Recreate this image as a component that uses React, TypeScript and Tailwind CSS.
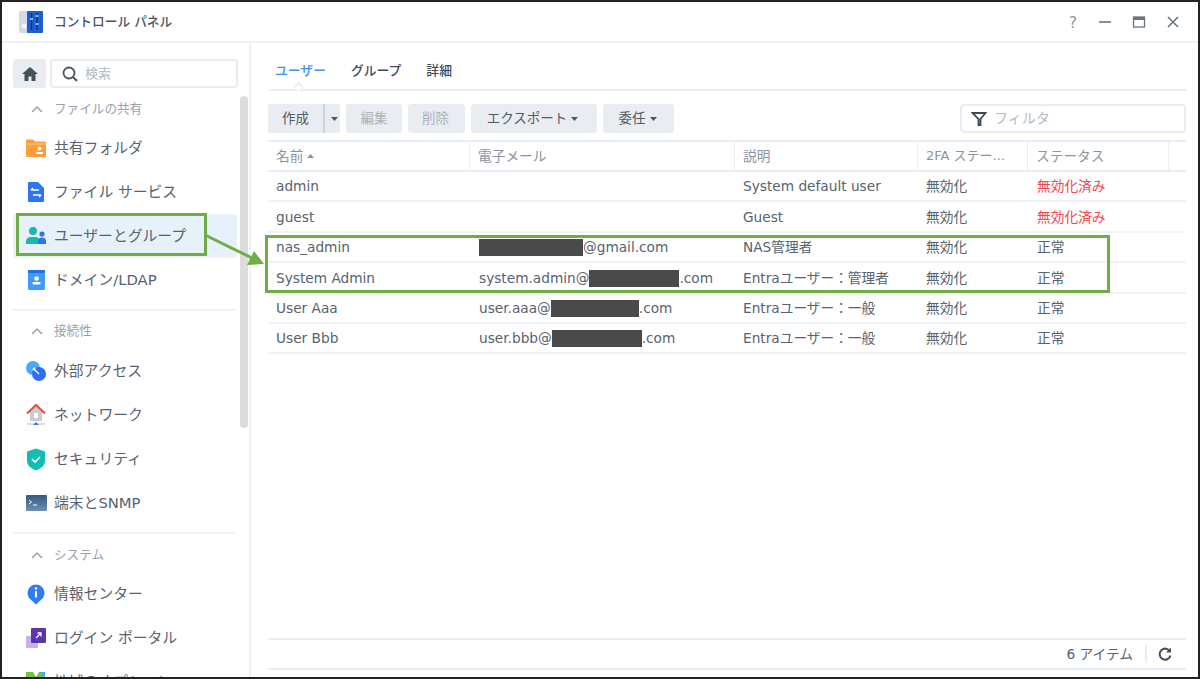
import React from "react";

const JP = "font-['DejaVu_Sans','Noto_Sans_CJK_JP',sans-serif]";

const Folder = () => (
  <svg width="22" height="20" viewBox="0 0 22 20">
    <path d="M1 2.500a1 1 0 0 1 1-1h6l2 2h10a1 1 0 0 1 1 1V18a1 1 0 0 1-1 1H2a1 1 0 0 1-1-1z" fill="#ff9d3b" />
    <path d="M1 5h20v2H1z" fill="#ffb45e" />
    <circle cx="14.500" cy="10.500" r="2" fill="#fff" />
    <rect x="11" y="14" width="7" height="2" rx="0.600" fill="#fff" />
  </svg>
);
const FileSvc = () => (
  <svg width="20" height="22" viewBox="0 0 20 22">
    <path d="M2 2a1 1 0 0 1 1-1h9l6 6v13a1 1 0 0 1-1 1H3a1 1 0 0 1-1-1z" fill="#2f74f0" />
    <path d="M5 9h8M5 9l2-2M15 14H7M15 14l-2 2" stroke="#fff" strokeWidth="1.500" fill="none" />
  </svg>
);
const Users = () => (
  <svg width="22" height="20" viewBox="0 0 22 20">
    <circle cx="8" cy="5" r="4" fill="#19b8b4" />
    <path d="M1 18v-3a5 5 0 0 1 5-4h4a5 5 0 0 1 5 4v3z" fill="#19b8b4" />
    <circle cx="17" cy="8" r="2.600" fill="#2f74f0" />
    <path d="M13 18v-3c0-2 1.500-3.500 4-3.500s4 1.500 4 3.500v3z" fill="#2f74f0" />
  </svg>
);
const Domain = () => (
  <svg width="20" height="22" viewBox="0 0 20 22">
    <rect x="2" y="1" width="17" height="20" rx="1.500" fill="#3f9bfa" />
    <rect x="2" y="1" width="17" height="3" rx="1" fill="#2271e8" />
    <circle cx="10.500" cy="9.500" r="2.300" fill="#fff" />
    <rect x="6.500" y="13" width="8" height="2.500" rx="0.800" fill="#fff" />
  </svg>
);
const External = () => (
  <svg width="22" height="22" viewBox="0 0 22 22">
    <circle cx="8" cy="8" r="7" fill="#4aa8f8" />
    <circle cx="14" cy="14" r="7" fill="#2f6ff0" />
    <path d="M9 9l5 5" stroke="#fff" strokeWidth="1.200" />
    <circle cx="9" cy="9" r="1.500" fill="#fff" />
  </svg>
);
const Network = () => (
  <svg width="20" height="24" viewBox="0 0 20 24">
    <path d="M10 2L2 10h2v8h12v-8h2z" fill="#c8ccd0" />
    <path d="M1 10.500L10 2l9 8.500" fill="none" stroke="#e5503e" strokeWidth="2" />
    <rect x="8" y="10" width="4" height="5" fill="#fff" />
    <path d="M1 21h18" stroke="#c4c8cc" strokeWidth="1.200" />
    <path d="M7 22l3-3 3 3z" fill="#2f7cf6" />
  </svg>
);
const Shield = () => (
  <svg width="20" height="23" viewBox="0 0 20 23">
    <path d="M10 0.500L19 3.500V13c0 4.500-4 7.500-9 9.500C5 20.500 1 17.500 1 13V3.500z" fill="#12bdb4" />
    <path d="M6 11l3 3 5-5" fill="none" stroke="#fff" strokeWidth="1.600" />
  </svg>
);
const Terminal = () => (
  <svg width="22" height="18" viewBox="0 0 22 18">
    <defs>
      <linearGradient id="term" x1="0" y1="0" x2="0" y2="1">
        <stop offset="0" stopColor="#35587f" />
        <stop offset="1" stopColor="#6f8fb0" />
      </linearGradient>
    </defs>
    <rect x="1" y="1" width="21" height="16" rx="1" fill="url(#term)" />
    <path d="M4 6l2.500 2L4 10" stroke="#fff" fill="none" strokeWidth="1" />
    <path d="M8 11h4" stroke="#fff" strokeWidth="1" />
  </svg>
);
const Info = () => (
  <svg width="20" height="22" viewBox="0 0 20 22">
    <path d="M10 21.500L3.500 15.500A8.500 8.500 0 1 1 16.500 15.500z" fill="#2f7cf6" />
    <circle cx="10" cy="5.500" r="1.300" fill="#fff" />
    <rect x="9" y="8" width="2" height="6.500" fill="#fff" />
  </svg>
);
const Portal = () => (
  <svg width="22" height="22" viewBox="0 0 22 22">
    <rect x="1" y="9" width="12" height="12" rx="1" fill="#c7aef0" />
    <rect x="6" y="1" width="15" height="15" rx="1" fill="#5b35b0" />
    <path d="M11 11l5-5M12.500 6H16v3.500" stroke="#fff" strokeWidth="1.300" fill="none" />
  </svg>
);
const Region = () => (
  <svg width="20" height="20" viewBox="0 0 20 20">
    <path d="M0 0h7l3 5 3-5h6v20H0z" fill="#7ac143" />
    <path d="M13 0h6v6z" fill="#4aa8f8" />
  </svg>
);

const Chevron = () => (
  <svg width="14" height="10" viewBox="0 0 14 10" className="ml-[1px] mr-[10px]">
    <path d="M2 8l5-5 5 5" fill="none" stroke="#98a2ac" strokeWidth="1.500" />
  </svg>
);

const Section = ({ label }: { label: string }) => (
  <div className="flex h-[24px] items-center pl-[16px] text-[12.600px] text-[#98a2ac]">
    <Chevron />
    {label}
  </div>
);

const Item = ({ icon, label, active }: { icon: React.ReactNode; label: string; active?: boolean }) => (
  <div className={`flex h-[44px] items-center rounded-[4px] pl-[12px] text-[14.800px] text-[#57636f] ${active ? "bg-[#e6f1fc]" : ""}`}>
    <span className="mr-[7px] flex w-[22px] justify-center">{icon}</span>
    <span className="whitespace-nowrap">{label}</span>
  </div>
);

const Caret = ({ up }: { up?: boolean }) => (
  <svg width="7" height="4" viewBox="0 0 7 4" className="ml-[4px] inline-block">
    <path d={up ? "M0 4L3.500 0 7 4z" : "M0 0l3.500 4L7 0z"} fill={up ? "#8a94a0" : "#4a5663"} />
  </svg>
);

const Btn = ({ w, disabled, children }: { w: string; disabled?: boolean; children: React.ReactNode }) => (
  <div className={`flex h-[29px] items-center justify-center rounded-[3px] bg-[#e9edf1] text-[13.500px] ${w} ${disabled ? "text-[#a9b2bb]" : "text-[#4f5b67]"}`}>
    {children}
  </div>
);

const Redact = ({ w }: { w: string }) => <span className={`inline-block h-[17px] bg-[#4a4a4a] align-[-4px] ${w}`} />;

const cols = "grid grid-cols-[202px_265px_183px_110px_141px_17px]";

const rows: { name: string; mail: React.ReactNode; desc: string; red?: boolean }[] = [
  { name: "admin", mail: "", desc: "System default user", red: true },
  { name: "guest", mail: "", desc: "Guest", red: true },
  { name: "nas_admin", mail: <><Redact w="w-[104px]" />@gmail.com</>, desc: "NAS管理者" },
  { name: "System Admin", mail: <>system.admin@<Redact w="w-[90px]" />.com</>, desc: "Entraユーザー：管理者" },
  { name: "User Aaa", mail: <>user.aaa@<Redact w="w-[88px]" />.com</>, desc: "Entraユーザー：一般" },
  { name: "User Bbb", mail: <>user.bbb@<Redact w="w-[90px]" />.com</>, desc: "Entraユーザー：一般" },
];

export default function App() {
  return (
    <div className={`relative flex h-[679px] w-[1200px] flex-col overflow-hidden border-2 border-[#222222] bg-white ${JP}`}>
      {/* title bar */}
      <div className="flex h-[41px] shrink-0 items-center border-b-2 border-[#eef2f6] pl-[16px] pr-[18px]">
        <svg width="26" height="24" viewBox="0 0 26 24" className="mr-[10px]">
          <rect x="1" y="1" width="12" height="22" rx="1.500" fill="#d5dae6" />
          <circle cx="6" cy="16" r="2.500" fill="#f3f5f8" />
          <rect x="9" y="1" width="16" height="22" rx="1" fill="#1d5fd0" />
          <path d="M13.500 3v17M19 3v17" stroke="#0c2f78" strokeWidth="1.500" />
          <path d="M12 9h3M17.500 6h3M17.500 14h3" stroke="#b9d6ff" strokeWidth="1.500" />
        </svg>
        <span className="text-[12.700px] font-medium text-[#4a5663]">コントロール パネル</span>
        <div className="ml-auto flex items-center gap-[20px]">
          <span className="-mr-[2px] w-[14px] pt-[3px] text-center text-[15px] text-[#8b949d]">?</span>
          <svg width="14" height="14" viewBox="0 0 14 14"><path d="M1 7h12" stroke="#6a7580" strokeWidth="1.600" /></svg>
          <svg width="14" height="14" viewBox="0 0 14 14"><rect x="1.500" y="2" width="11" height="10" fill="none" stroke="#6a7580" strokeWidth="1.300" /><rect x="1.500" y="2" width="11" height="3" fill="#6a7580" /></svg>
          <svg width="14" height="14" viewBox="0 0 14 14"><path d="M2 2l10 10M12 2L2 12" stroke="#6a7580" strokeWidth="1.600" /></svg>
        </div>
      </div>

      <div className="flex min-h-0 flex-1">
        {/* sidebar */}
        <aside className="relative w-[249px] shrink-0 overflow-hidden border-r-2 border-[#eef2f6]">
          <div className="flex gap-[4px] pl-[11px] pt-[16px] pr-[11px]">
            <div className="flex h-[29px] w-[33px] items-center justify-center rounded-[3px] bg-[#e9edf1]">
              <svg width="18" height="16" viewBox="0 0 18 16"><path d="M9 1L1 8h2.500v7h4v-4.500h3V15h4V8H17z" fill="#45505b" /></svg>
            </div>
            <div className="flex h-[29px] flex-1 items-center rounded-[4px] border-2 border-[#e6edf4] pl-[9px] text-[13px] text-[#b4bbc3]">
              <svg width="18" height="18" viewBox="0 0 18 18" className="mr-[6px]"><circle cx="8" cy="8" r="5.500" fill="none" stroke="#4a5663" strokeWidth="1.800" /><path d="M12 12l4 4" stroke="#4a5663" strokeWidth="2" /></svg>
              検索
            </div>
          </div>
          <div className="w-[235px] pl-[11px] pt-[9px]">
            <Section label="ファイルの共有" />
            <div className="pt-[5px]">
              <Item icon={<Folder />} label="共有フォルダ" />
              <Item icon={<FileSvc />} label="ファイル サービス" />
              <Item icon={<Users />} label="ユーザーとグループ" active />
              <Item icon={<Domain />} label="ドメイン/LDAP" />
            </div>
            <div className="mt-[7px] border-t-2 border-[#f0f3f7] pt-[8px]">
              <Section label="接続性" />
              <div className="pt-[6px]">
                <Item icon={<External />} label="外部アクセス" />
                <Item icon={<Network />} label="ネットワーク" />
                <Item icon={<Shield />} label="セキュリティ" />
                <Item icon={<Terminal />} label="端末とSNMP" />
              </div>
            </div>
            <div className="mt-[7px] border-t-2 border-[#f0f3f7] pt-[9px]">
              <Section label="システム" />
              <div className="pt-[5px]">
                <Item icon={<Info />} label="情報センター" />
                <Item icon={<Portal />} label="ログイン ポータル" />
                <Item icon={<Region />} label="地域のオプション" />
              </div>
            </div>
          </div>
          {/* scrollbar */}
          <div className="absolute left-[238px] top-[53px] h-[332px] w-[8px] rounded-[4px] bg-[#dcdcdc]" />
        </aside>

        {/* main */}
        <main className="flex min-w-0 flex-1 flex-col pl-[17px] pr-[12px]">
          <div className="relative flex h-[48px] shrink-0 items-center gap-[25px] border-b-2 border-[#e8eef4] pl-[7px] pt-[9px] text-[12.800px] font-medium text-[#3f4a55]">
            <span className="text-[#3b92f2]">ユーザー</span>
            <span>グループ</span>
            <span>詳細</span>
            <span className="absolute bottom-[-2px] left-[27px] h-[7px] w-[7px] translate-y-[-1px] rotate-45 border-l-2 border-t-2 border-[#e8eef4] bg-white" />
          </div>
          <div className="flex shrink-0 items-center gap-[6px] pt-[13px]">
            <div className="flex h-[29px] w-[72px] items-center rounded-[3px] bg-[#e9edf1] text-[13.500px] text-[#4f5b67]">
              <span className="w-[55px] text-center">作成</span>
              <span className="flex h-full flex-1 items-center justify-center border-l-2 border-[#ccd5dd]"><Caret /></span>
            </div>
            <Btn w="w-[56px]" disabled>編集</Btn>
            <Btn w="w-[57px] pr-[2px]" disabled>削除</Btn>
            <Btn w="w-[126px] pr-[3px]">エクスポート<Caret /></Btn>
            <Btn w="w-[71px] pr-[2px]">委任<Caret /></Btn>
            <div className="ml-auto flex h-[29px] w-[226px] items-center rounded-[4px] border-2 border-[#e6edf4] pl-[9px] text-[14px] text-[#b4bbc3]">
              <svg width="16" height="16" viewBox="0 0 16 16" className="mr-[7px]"><path d="M1.500 2h13L9.500 8v6h-2V8z" fill="none" stroke="#3f4a55" strokeWidth="1.800" /></svg>
              フィルタ
            </div>
          </div>

          <div className="mt-[7px] flex min-h-0 flex-1 flex-col">
            <div className={`${cols} h-[32px] shrink-0 border-y-2 border-[#e8eef4] text-[13.700px] text-[#8a94a0]`}>
              <div className="flex items-center border-r border-[#e8eef4] pl-[8px]">名前<Caret up /></div>
              <div className="flex items-center border-r border-[#e8eef4] pl-[8px]">電子メール</div>
              <div className="flex items-center border-r border-[#e8eef4] pl-[8px]">説明</div>
              <div className="flex items-center border-r border-[#e8eef4] pl-[8px] text-[13px]">2FA ステー...</div>
              <div className="flex items-center border-r border-[#e8eef4] pl-[8px]">ステータス</div>
              <div />
            </div>
            {rows.map((r) => (
              <div key={r.name} className={`${cols} h-[30.400px] shrink-0 items-center border-b-2 border-[#f0f4f8] pt-[1px] text-[13.700px] text-[#57636f]`}>
                <div className="pl-[8px]">{r.name}</div>
                <div className="whitespace-nowrap pl-[9px]">{r.mail}</div>
                <div className="whitespace-nowrap pl-[8px]">{r.desc}</div>
                <div className="pl-[8px]">無効化</div>
                <div className={`pl-[9px] ${r.red ? "text-[#f0484e]" : ""}`}>{r.red ? "無効化済み" : "正常"}</div>
                <div />
              </div>
            ))}
            <div className="flex-1" />
            <div className="mb-[7px] flex h-[32px] shrink-0 items-center justify-end border-y-2 border-[#e8eef4] pr-[13px] text-[13.700px] text-[#57636f]">
              <span className="mr-[12px]">6 アイテム</span>
              <span className="mr-[10px] h-[18px] border-l-2 border-[#e8eef4]" />
              <svg width="16" height="16" viewBox="0 0 16 16"><path d="M13 5.500A5.500 5.500 0 1 0 13.500 9.500" fill="none" stroke="#45505b" strokeWidth="2" /><path d="M14 1.500V6.500H9z" fill="#45505b" /></svg>
            </div>
          </div>
        </main>
      </div>

      {/* annotations */}
      <div className="absolute left-[14px] top-[211px] h-[43px] w-[191px] border-[3.500px] border-[#70ad47]" />
      <div className="absolute left-[263px] top-[233px] h-[58px] w-[845px] border-[3px] border-[#70ad47]" />
      <svg className="absolute left-0 top-0" width="1196" height="675" viewBox="0 0 1196 675">
        <path d="M203 233L252 257" stroke="#70ad47" strokeWidth="3" />
        <path d="M262 262L252 249L245 263z" fill="#70ad47" />
      </svg>
    </div>
  );
}
